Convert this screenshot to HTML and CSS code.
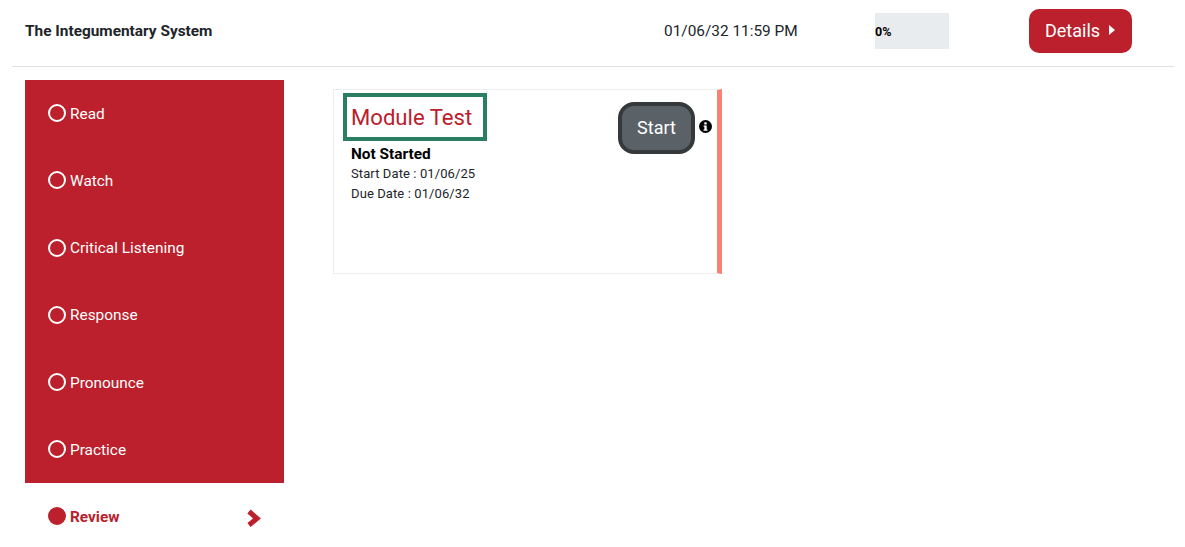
FILE: index.html
```html
<!DOCTYPE html>
<html lang="en">
<head>
  <meta charset="UTF-8" />
  <title>The Integumentary System</title>
  <link rel="stylesheet" href="styles.css">
</head>
<body>

  <!-- Top row -->
  <header class="top-row">
    <div class="lesson-title">The Integumentary System</div>
    <div class="lesson-due">01/06/32 11:59 PM</div>
    <div class="progress"><span class="progress-label">0%</span></div>
    <a class="details-btn" href="#">Details
      <svg class="details-caret" width="6" height="10" viewBox="0 0 6 10"><path d="M0 0L6 5L0 10Z" fill="#fff"/></svg>
    </a>
  </header>

  <div class="content">
    <!-- Sidebar -->
    <nav class="steps">
      <a class="step" href="#"><span class="dot"></span>Read</a>
      <a class="step" href="#"><span class="dot"></span>Watch</a>
      <a class="step" href="#"><span class="dot"></span>Critical Listening</a>
      <a class="step" href="#"><span class="dot"></span>Response</a>
      <a class="step" href="#"><span class="dot"></span>Pronounce</a>
      <a class="step" href="#"><span class="dot"></span>Practice</a>
      <a class="step step-active" href="#"><span class="dot"></span>Review
        <svg class="step-arrow" width="14" height="18" viewBox="0 0 14 18"><path d="M2 2.5L10 9.5L2 16" fill="none" stroke="#bb202c" stroke-width="5" stroke-linejoin="miter"/></svg>
      </a>
    </nav>

    <main class="activity">
      <section class="card">
        <div class="card-info">
          <h2 class="card-title">Module Test</h2>
          <div class="card-status">Not Started</div>
          <div class="card-date">Start Date : 01/06/25</div>
          <div class="card-date">Due Date : 01/06/32</div>
        </div>
        <div class="card-action">
          <button class="start-btn">Start</button>
          <svg class="info-icon" width="13" height="13" viewBox="0 0 13 13">
            <circle cx="6.5" cy="6.5" r="6.5" fill="#000"/>
            <rect x="5.3" y="2.3" width="2.4" height="2.2" fill="#fff"/>
            <path d="M4.6 5.5H7.7V9.4H8.5V10.7H4.6V9.4H5.4V6.8H4.6Z" fill="#fff"/>
          </svg>
        </div>
      </section>
    </main>
  </div>

</body>
</html>
```

FILE: styles.css
```css
html, body {
  overflow: hidden;
}
body {
  margin: 0;
  font-family: Roboto, sans-serif;
  background-color: #fff;
  color: #212529;
}

/* Top row */
.top-row {
  display: flex;
  align-items: center;
  height: 66px;
  margin: 0 11px 0 12px;
  padding-left: 13px;
  border-bottom: 1px solid #dee2e6;
  box-sizing: content-box;
}
.lesson-title {
  width: 639px;
  margin-top: -4px;
  font-size: 15.4px;
  font-weight: 700;
}
.lesson-due {
  width: 211px;
  margin-top: -4px;
  font-size: 15.4px;
}
.progress {
  display: flex;
  align-items: center;
  width: 74px;
  height: 36px;
  margin-top: -4px;
  background-color: #e9ecef;
}
.progress-label {
  font-size: 12.5px;
  font-weight: 700;
  color: #000;
}
.details-btn {
  display: flex;
  align-items: center;
  gap: 9px;
  box-sizing: border-box;
  width: 103px;
  height: 44px;
  margin-left: 80px;
  margin-top: -4px;
  padding: 0 0 2px 16px;
  background-color: #bb202c;
  border-radius: 10px;
  color: #fff;
  font-size: 18px;
  text-decoration: none;
}
.details-caret {
  margin-top: -1px;
}

.content {
  display: flex;
  gap: 49px;
  padding: 13.2px 0 0 25px;
}

/* Sidebar */
.steps {
  flex: none;
  width: 259px;
  background-color: #bb202c;
}
.step {
  display: flex;
  align-items: center;
  gap: 4px;
  height: 67.2px;
  padding: 0 23px 0 23px;
  box-sizing: border-box;
  color: #fff;
  font-size: 15.4px;
  font-weight: 400;
  text-decoration: none;
}
.dot {
  flex: none;
  width: 18px;
  height: 18px;
  margin-top: -1px;
  box-sizing: border-box;
  border: 2px solid #fff;
  border-radius: 50%;
}
.step-active {
  background-color: #fff;
  color: #bb202c;
  font-weight: 700;
}
.step-active .dot {
  background-color: #bb202c;
  border-color: #bb202c;
}
.step-arrow {
  margin-left: auto;
  margin-top: 3px;
}

/* Activity card */
.activity {
  padding-top: 9px;
}
.card {
  display: flex;
  justify-content: space-between;
  box-sizing: border-box;
  width: 389px;
  height: 185px;
  padding: 3px 5px 0 9px;
  border: 1px solid #eee;
  border-right: 5px solid #fa8072;
}
.card-title {
  width: 144px;
  height: 48px;
  box-sizing: border-box;
  margin: 0 0 4px;
  padding-left: 4px;
  border: 4px solid #2a7f62;
  color: #bb202c;
  font-size: 22.1px;
  font-weight: 400;
  line-height: 40px;
}
.card-info {
  color: #212529;
}
.card-status {
  margin-left: 8px;
  color: #000;
  font-size: 15.4px;
  font-weight: 700;
  line-height: 19px;
}
.card-date {
  margin-left: 8px;
  font-size: 13px;
  line-height: 20px;
  letter-spacing: 0.1px;
}
.card-date:first-of-type {
  margin-top: 1px;
}
.card-action {
  display: flex;
  align-items: flex-start;
  gap: 4px;
  padding-top: 9px;
}
.start-btn {
  width: 77px;
  height: 52px;
  padding: 0 0 2px;
  background-color: #5a6268;
  border: 4px solid #36393b;
  border-radius: 16px;
  color: #fff;
  font-family: inherit;
  font-size: 18px;
  cursor: pointer;
}
.info-icon {
  margin-top: 18px;
}
```
